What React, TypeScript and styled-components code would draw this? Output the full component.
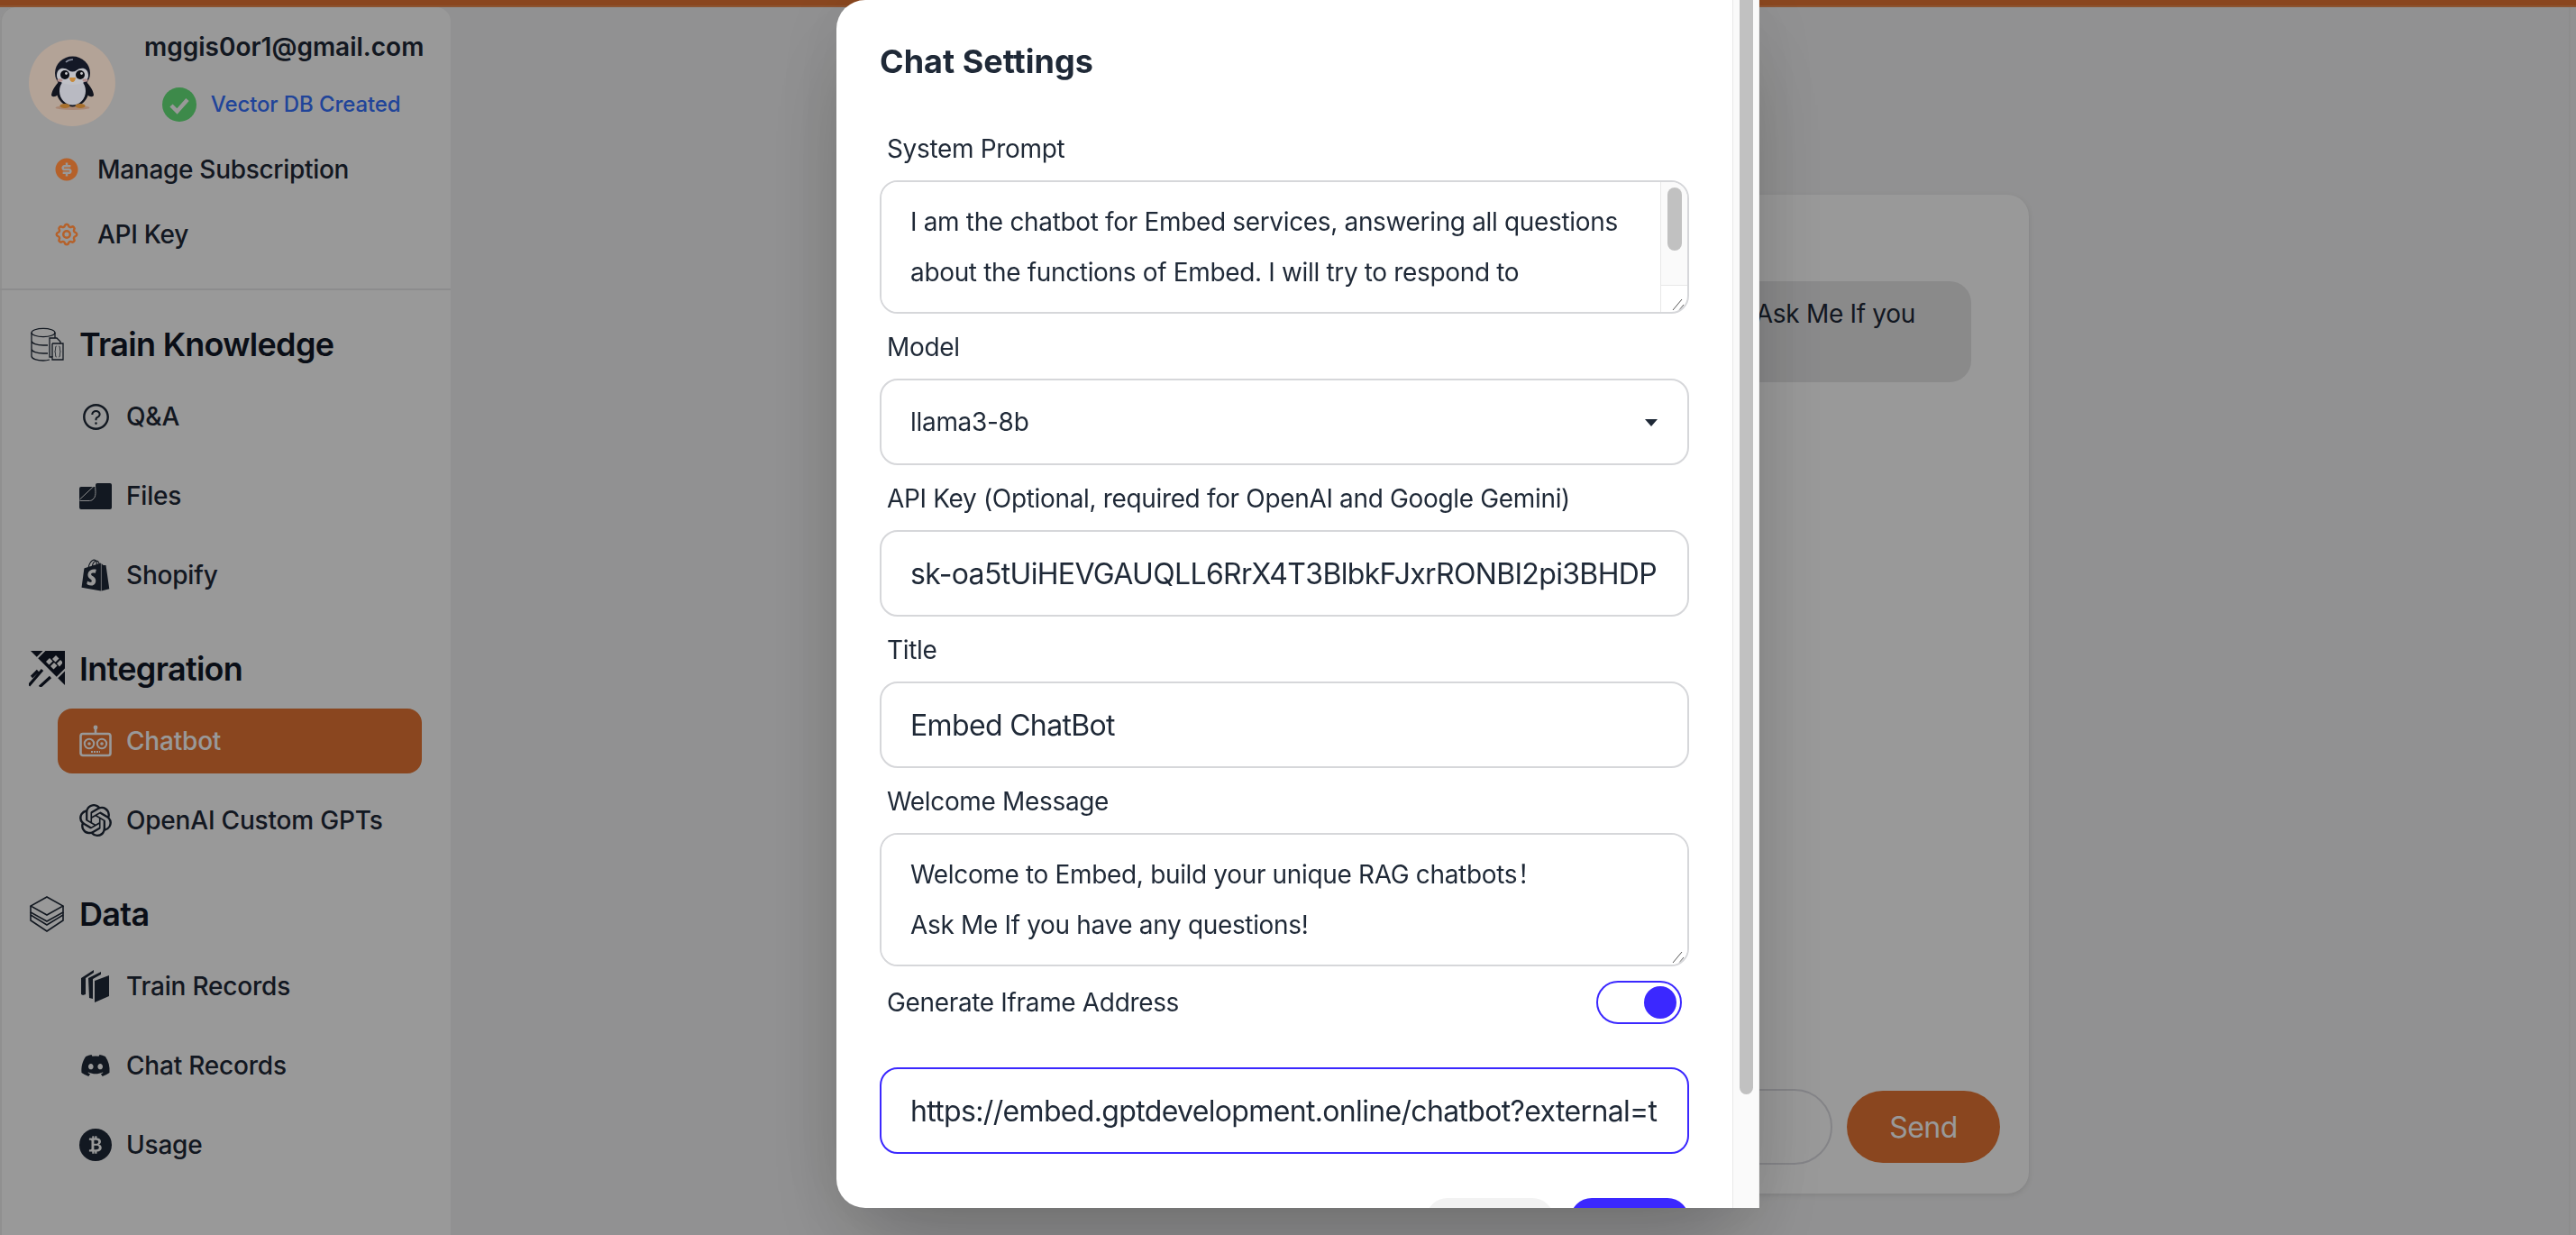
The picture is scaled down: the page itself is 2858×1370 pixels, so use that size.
import React from "react";
import styled, { createGlobalStyle } from "styled-components";
import { FaDiscord, FaShopify } from "react-icons/fa";
import { HiOutlineCog } from "react-icons/hi";
import { AiOutlineQuestionCircle } from "react-icons/ai";
import { BsCurrencyBitcoin } from "react-icons/bs";
import { RiMoneyDollarCircleFill } from "react-icons/ri";
import { SiOpenai } from "react-icons/si";

const GlobalStyle = createGlobalStyle`
  html, body {
    margin: 0;
    height: 100%;
    overflow: hidden;
    background: #f2f2f3;
    font-family: Inter, "Noto Sans CJK SC", sans-serif;
    color: #1f2937;
  }
  * {
    box-sizing: border-box;
  }
`;

const Page = styled.div`
  height: 1370px;
  display: flex;
  flex-direction: column;
`;
const TopBar = styled.div`
  height: 8px;
  flex: none;
  background: #e67634;
  border-bottom: 2px solid #ea8a50;
`;
const Body = styled.div`
  flex: 1;
  display: flex;
  min-height: 0;
  padding-right: 6px;
`;

const Sidebar = styled.aside`
  width: 500px;
  flex: none;
  background: #fff;
  border-radius: 16px 16px 0 0;
  box-shadow: inset 2px 0 0 #f0f0f0;
  display: flex;
  flex-direction: column;
`;
const Profile = styled.div`
  height: 144px;
  padding: 28px 32px 0;
  display: flex;
  gap: 32px;
`;
/* these stay bright in the screenshot, they sit above the dimming layer */
const Avatar = styled.div`
  position: relative;
  z-index: 2;
  width: 96px;
  height: 96px;
  margin-top: 8px;
  flex: none;
  border-radius: 50%;
  background: #b3a397;
  display: flex;
  align-items: center;
  justify-content: center;
`;
const ProfileText = styled.div`
  display: flex;
  flex-direction: column;
  align-items: center;
`;
const Email = styled.div`
  font-size: 28px;
  line-height: 32px;
  font-weight: 600;
  margin-bottom: 28px;
  white-space: nowrap;
`;
const VectorStatus = styled.div`
  display: flex;
  align-items: center;
  gap: 16px;
  padding-right: 6px;
  font-size: 24px;
  line-height: 40px;
  font-weight: 500;
  letter-spacing: -0.1px;
  color: #3672ff;
`;
const AccountLink = styled.div`
  height: 72px;
  padding-left: 59px;
  display: flex;
  align-items: center;
  gap: 19px;
  font-size: 28px;
  font-weight: 500;
  letter-spacing: -0.3px;
`;
const AccountIcon = styled.span`
  position: relative;
  z-index: 2;
  width: 30px;
  height: 30px;
  flex: none;
  color: #b5612a;
  display: flex;
  align-items: center;
  justify-content: center;
`;
const Divider = styled.hr`
  margin: 24px 0 36px;
  height: 2px;
  border: 0;
  flex: none;
  background: #e9e9ec;
`;
const Section = styled.section`
  margin-bottom: 44px;
  display: flex;
  flex-direction: column;
  gap: 16px;
`;
const SectionHead = styled.h2`
  margin: 0 0 4px;
  height: 48px;
  padding-left: 32px;
  display: flex;
  align-items: center;
  gap: 16px;
  font-size: 36px;
  font-weight: 600;
  letter-spacing: -0.7px;
  color: #111827;
`;
const HeadIcon = styled.span`
  width: 40px;
  height: 40px;
  flex: none;
  display: flex;
  align-items: center;
  justify-content: center;
`;
const NavItem = styled.div<{ $active?: boolean }>`
  height: 72px;
  width: 404px;
  margin-left: 64px;
  padding-left: 24px;
  border-radius: 16px;
  display: flex;
  align-items: center;
  gap: 16px;
  font-size: 28px;
  font-weight: 500;
  letter-spacing: -0.2px;
  background: ${(p) => (p.$active ? "#e67634" : "transparent")};
  color: ${(p) => (p.$active ? "#fff" : "#1f2937")};
`;
const NavIcon = styled.span`
  width: 36px;
  height: 36px;
  flex: none;
  display: flex;
  align-items: center;
  justify-content: center;
`;
const BitcoinBadge = styled(NavIcon)`
  border-radius: 50%;
  background: #1f2937;
  color: #fff;
`;

const Main = styled.main`
  flex: 1;
  min-width: 0;
  padding: 208px 0 0 600px;
  border-right: 2px solid #ebebec;
`;
const ChatCard = styled.div`
  width: 1151px;
  height: 1108px;
  background: #fff;
  border-radius: 24px;
  box-shadow: 0 2px 6px rgba(0, 0, 0, 0.1);
  padding: 96px 32px 32px;
  display: flex;
  flex-direction: column;
  justify-content: space-between;
`;
const Bubble = styled.div`
  align-self: flex-end;
  margin-right: 32px;
  padding: 16px 62px 16px 32px;
  border-radius: 24px;
  background: #e6e6e7;
  font-size: 28px;
  line-height: 40px;
  letter-spacing: -0.3px;
  white-space: nowrap;
`;
const ChatForm = styled.div`
  display: flex;
  align-items: center;
  gap: 16px;
`;
const ChatInput = styled.div`
  flex: 1;
  height: 84px;
  border: 2px solid #dcdce2;
  border-radius: 42px;
`;
const SendButton = styled.div`
  width: 170px;
  height: 80px;
  border-radius: 40px;
  background: #e67634;
  color: #fff;
  font-size: 32px;
  letter-spacing: -0.5px;
  display: flex;
  align-items: center;
  justify-content: center;
`;

const Backdrop = styled.div`
  position: fixed;
  inset: 0;
  z-index: 1;
  background: rgba(0, 0, 0, 0.4);
`;
const Modal = styled.div`
  position: fixed;
  z-index: 3;
  top: 0;
  left: 928px;
  width: 1024px;
  height: 1340px;
  background: #fff;
  border-radius: 32px 0 0 32px;
  box-shadow: 0 50px 100px -24px rgba(0, 0, 0, 0.25), 0 0 90px rgba(0, 0, 0, 0.08);
  display: flex;
  overflow: hidden;
`;
const ModalBody = styled.div`
  flex: 1;
  min-width: 0;
  padding: 40px 48px 0;
`;
const ModalRail = styled.div`
  width: 30px;
  flex: none;
  padding: 0 6px 0 7px;
  background: #fafafa;
  border-left: 1px solid #e8e8e8;
  border-right: 1px solid #efefef;
`;
const RailThumb = styled.div`
  height: 1214px;
  background: #c1c1c1;
  border-radius: 0 0 8px 8px;
`;
const ModalTitle = styled.h3`
  margin: 0 0 32px;
  font-size: 36px;
  line-height: 56px;
  font-weight: 700;
`;
const FieldLabel = styled.label`
  display: block;
  height: 72px;
  padding: 17px 8px 15px;
  font-size: 28px;
  line-height: 40px;
  letter-spacing: -0.34px;
`;
const fieldCss = `
  display: block;
  width: 100%;
  background: #fff;
  border: 2px solid #d6d7da;
  border-radius: 20px;
  padding: 0 32px;
  color: #1f2937;
  font-family: Inter, "Noto Sans CJK SC", sans-serif;
  outline: none;
`;
const TextInput = styled.input<{ $focused?: boolean }>`
  ${fieldCss}
  height: 96px;
  font-size: 32px;
  letter-spacing: -0.66px;
  border-color: ${(p) => (p.$focused ? "#3b28ff" : "#d6d7da")};
`;
const AreaBox = styled.div`
  position: relative;
  height: 148px;
  display: flex;
  overflow: hidden;
  border: 2px solid #d6d7da;
  border-radius: 20px;
`;
const TextArea = styled.textarea`
  flex: 1;
  min-width: 0;
  border: 0;
  outline: none;
  padding: 16px 32px;
  font-family: Inter, "Noto Sans CJK SC", sans-serif;
  font-size: 28px;
  line-height: 56px;
  letter-spacing: -0.34px;
  color: #1f2937;
  resize: none;
  overflow: hidden;
`;
const AreaRail = styled.div`
  width: 30px;
  flex: none;
  display: flex;
  flex-direction: column;
  border-left: 1px solid #e8e8e8;
`;
const AreaTrack = styled.div`
  flex: 1;
  padding: 6px 6px 0 7px;
  background: #fafafa;
  border-bottom: 1px solid #e8e8e8;
`;
const AreaThumb = styled.div`
  height: 70px;
  border-radius: 8px;
  background: #c1c1c1;
`;
const AreaCorner = styled.div`
  height: 29px;
  flex: none;
`;
const ResizeGrip = styled.svg`
  position: absolute;
  right: 1px;
  bottom: 1px;
  width: 17px;
  height: 14px;
`;
const SelectWrap = styled.div`
  position: relative;
  &::after {
    content: "";
    position: absolute;
    top: 45px;
    right: 35px;
    border-style: solid;
    border-width: 8px 7.5px 0;
    border-color: #1f2937 transparent transparent;
  }
`;
const Select = styled.select`
  ${fieldCss}
  height: 96px;
  font-size: 28px;
  letter-spacing: -0.3px;
  appearance: none;
`;
const ToggleRow = styled.div`
  height: 72px;
  margin: 4px 0 36px;
  padding: 0 8px;
  display: flex;
  align-items: center;
  justify-content: space-between;
  font-size: 28px;
  letter-spacing: -0.34px;
`;
const Toggle = styled.div`
  width: 95px;
  height: 48px;
  padding: 4px;
  border: 2px solid #3b28ff;
  border-radius: 24px;
  display: flex;
  justify-content: flex-end;
  &::after {
    content: "";
    width: 36px;
    height: 36px;
    border-radius: 50%;
    background: #3b28ff;
  }
`;
const ModalActions = styled.div`
  margin-top: 49px;
  display: flex;
  justify-content: flex-end;
  gap: 18px;
`;
const ActionButton = styled.button<{ $primary?: boolean }>`
  height: 96px;
  width: ${(p) => (p.$primary ? "132px" : "142px")};
  border: 0;
  border-radius: 24px;
  background: ${(p) => (p.$primary ? "#3b28ff" : "#f2f2f2")};
`;

const Grip = () => (
  <ResizeGrip viewBox="0 0 17 14" fill="none" stroke="#555" strokeWidth="1">
    <path d="M2 13 L12 1 M9 13 L14 7" />
  </ResizeGrip>
);

const PenguinIcon = () => (
  <svg width="47" height="60" viewBox="0 0 47 60">
    <ellipse cx="23.5" cy="57.5" rx="19" ry="2.4" fill="#a98875" />
    <path d="M9 28 C3 34 0 40 0 44 C3 47 8 44 11 38 Z M38 28 C44 34 47 40 47 44 C44 47 39 44 36 38 Z" fill="#12151f" />
    <ellipse cx="23.5" cy="38" rx="18" ry="18.5" fill="#12151f" />
    <ellipse cx="23.5" cy="19" rx="19.5" ry="18.5" fill="#141826" />
    <ellipse cx="23.5" cy="39" rx="14.5" ry="15.5" fill="#b9bac2" />
    <path d="M6 22 C6 13 14 12 19 16 C22 18 25 18 28 16 C33 12 41 13 41 22 C41 28 34 32 23.5 32 C13 32 6 28 6 22 Z" fill="#bfc0c6" />
    <circle cx="15" cy="21" r="5" fill="#0d0f16" />
    <circle cx="32" cy="21" r="5" fill="#0d0f16" />
    <circle cx="16.5" cy="19.5" r="1.4" fill="#c8c8cc" />
    <circle cx="33.5" cy="19.5" r="1.4" fill="#c8c8cc" />
    <path d="M20 24 H27 C27 27 25 29 23.5 29 C22 29 20 27 20 24 Z" fill="#c78a3c" />
    <ellipse cx="9.5" cy="27" rx="3" ry="1.8" fill="#b08f8e" />
    <ellipse cx="37.5" cy="27" rx="3" ry="1.8" fill="#b08f8e" />
    <path d="M16 7 C18 5 21 4 24 4" fill="none" stroke="#8b90a0" strokeWidth="1.6" />
    <ellipse cx="15" cy="55.5" rx="5.5" ry="2.6" fill="#a8702c" />
    <ellipse cx="32" cy="55.5" rx="5.5" ry="2.6" fill="#a8702c" />
  </svg>
);

const CheckBadge = () => (
  <svg width="38" height="38" viewBox="0 0 38 38">
    <circle cx="19" cy="19" r="19" fill="#66e67c" />
    <path d="M10 20 L16.5 26.5 L28 13.5" fill="none" stroke="#fff" strokeWidth="4.5" />
  </svg>
);

const DatabaseFileIcon = () => (
  <svg width="38" height="38" viewBox="0 0 38 38" fill="none" stroke="#1f2937" strokeWidth="1.3">
    <ellipse cx="15" cy="6" rx="13" ry="4.6" />
    <path d="M2 6 V32 C2 35 8 37 15 37 C18 37 20 36.6 22 36 M28 6 V12 M2 15 C2 18 8 20 15 20 H20 M2 24 C2 27 8 29 15 29 H20" />
    <path d="M22 12 H30 L34 16 V18 H37 V36 H25 V33 H22 Z" fill="#fff" />
    <path d="M25 18 H34 M25 18 V33" />
    <path d="M29.5 21 C28 21 29 26 27.8 27 C29 28 28 33 29.5 33 M32.5 21 C34 21 33 26 34.2 27 C33 28 34 33 32.5 33" strokeWidth="1" />
  </svg>
);
const FilesIcon = () => (
  <svg width="36" height="29" viewBox="0 0 36 29">
    <path d="M0 6 A2 2 0 0 1 2 4 H18 V2 A2 2 0 0 1 20 0 H34 A2 2 0 0 1 36 2 V27 A2 2 0 0 1 34 29 H2 A2 2 0 0 1 0 27 Z" fill="#1f2937" />
    <path d="M0.5 18 L17.5 2 C18 9 19 15 15 18 C13.5 19.5 12 19.5 10 19.5 H0.5" fill="none" stroke="#fff" strokeWidth="0.9" />
  </svg>
);
const RocketIcon = () => (
  <svg width="40" height="40" viewBox="0 0 40 40">
    <path d="M2 0 H40 V38 Z" fill="#111827" />
    <path d="M9 8 L18 -1 M31 30 L41 20" stroke="#fff" strokeWidth="2" />
    <path d="M19 12 L23 8 L26.5 11.5 L22.5 15.5 Z M26 9 L30 5 L33.5 8.5 L29.5 12.5 Z M24 17 L28 13 L31.5 16.5 L27.5 20.5 Z M31 14 L35 10 L37 12 L37 14 L34 17.5 Z" fill="#fff" />
    <path d="M0 38.5 L15 21 M12 40 L24 29 M3 29 L10 22" fill="none" stroke="#111827" strokeWidth="3.2" />
  </svg>
);
const BotIcon = () => (
  <svg width="36" height="36" viewBox="0 0 36 36" fill="none" stroke="currentColor" strokeWidth="2.6">
    <circle cx="18" cy="3" r="2.4" fill="currentColor" stroke="none" />
    <path d="M18 4 V11" />
    <rect x="1.5" y="10" width="33" height="24" rx="2.5" />
    <circle cx="11" cy="21" r="5.2" strokeWidth="2" />
    <circle cx="25" cy="21" r="5.2" strokeWidth="2" />
    <circle cx="11" cy="21" r="1.8" fill="currentColor" stroke="none" />
    <circle cx="25" cy="21" r="1.8" fill="currentColor" stroke="none" />
    <path d="M13 30 H23" strokeWidth="2" strokeDasharray="2 1" />
  </svg>
);
const StackIcon = () => (
  <svg width="38" height="40" viewBox="0 0 38 40" fill="none" stroke="#1f2937" strokeWidth="1.6">
    <path d="M19 1 L37 11 L19 21 L1 11 Z" />
    <path d="M1 11 V18 L19 28 L37 18 V11" />
    <path d="M1 18 V27 L19 39 L37 27 V18" />
    <path d="M1 21 L19 32 L37 21" />
  </svg>
);
const RecordsIcon = () => (
  <svg width="32" height="36" viewBox="0 0 32 36" fill="#1f2937">
    <path d="M0 9 L14 0 V3 L5 9 V27 L2 28 L0 27 Z" />
    <path d="M8 9 L22 2 V5 L13 10 V32 L9 31 Z" />
    <path d="M15 12 L31 6 V29 L15 36 Z" />
  </svg>
);

const App = () => (
  <>
    <GlobalStyle />
    <Page>
      <TopBar />
      <Body>
        <Sidebar>
          <Profile>
            <Avatar>
              <PenguinIcon />
            </Avatar>
            <ProfileText>
              <Email>mggis0or1@gmail.com</Email>
              <VectorStatus>
                <CheckBadge />
                Vector DB Created
              </VectorStatus>
            </ProfileText>
          </Profile>
          <AccountLink>
            <AccountIcon>
              <RiMoneyDollarCircleFill size={36} />
            </AccountIcon>
            Manage Subscription
          </AccountLink>
          <AccountLink>
            <AccountIcon>
              <HiOutlineCog size={38} />
            </AccountIcon>
            API Key
          </AccountLink>
          <Divider />
          <Section>
            <SectionHead>
              <HeadIcon>
                <DatabaseFileIcon />
              </HeadIcon>
              Train Knowledge
            </SectionHead>
            <NavItem>
              <NavIcon>
                <AiOutlineQuestionCircle size={33} />
              </NavIcon>
              Q&amp;A
            </NavItem>
            <NavItem>
              <NavIcon>
                <FilesIcon />
              </NavIcon>
              Files
            </NavItem>
            <NavItem>
              <NavIcon>
                <FaShopify size={36} />
              </NavIcon>
              Shopify
            </NavItem>
          </Section>
          <Section>
            <SectionHead>
              <HeadIcon>
                <RocketIcon />
              </HeadIcon>
              Integration
            </SectionHead>
            <NavItem $active>
              <NavIcon>
                <BotIcon />
              </NavIcon>
              Chatbot
            </NavItem>
            <NavItem>
              <NavIcon>
                <SiOpenai size={36} />
              </NavIcon>
              OpenAI Custom GPTs
            </NavItem>
          </Section>
          <Section>
            <SectionHead>
              <HeadIcon>
                <StackIcon />
              </HeadIcon>
              Data
            </SectionHead>
            <NavItem>
              <NavIcon>
                <RecordsIcon />
              </NavIcon>
              Train Records
            </NavItem>
            <NavItem>
              <NavIcon>
                <FaDiscord size={34} />
              </NavIcon>
              Chat Records
            </NavItem>
            <NavItem>
              <BitcoinBadge>
                <BsCurrencyBitcoin size={24} />
              </BitcoinBadge>
              Usage
            </NavItem>
          </Section>
        </Sidebar>
        <Main>
          <ChatCard>
            <Bubble>
              Welcome to Embed, build your unique RAG chatbots！ Ask Me If you
              <br />
              have any questions!
            </Bubble>
            <ChatForm>
              <ChatInput />
              <SendButton>Send</SendButton>
            </ChatForm>
          </ChatCard>
        </Main>
      </Body>
    </Page>
    <Backdrop />
    <Modal>
      <ModalBody>
        <ModalTitle>Chat Settings</ModalTitle>
        <FieldLabel>System Prompt</FieldLabel>
        <AreaBox>
          <TextArea
            readOnly
            value="I am the chatbot for Embed services, answering all questions about the functions of Embed. I will try to respond to questions from users in a friendly and accurate way."
          />
          <AreaRail>
            <AreaTrack>
              <AreaThumb />
            </AreaTrack>
            <AreaCorner />
          </AreaRail>
          <Grip />
        </AreaBox>
        <FieldLabel>Model</FieldLabel>
        <SelectWrap>
          <Select defaultValue="llama3-8b">
            <option>llama3-8b</option>
          </Select>
        </SelectWrap>
        <FieldLabel>API Key (Optional, required for OpenAI and Google Gemini)</FieldLabel>
        <TextInput readOnly value="sk-oa5tUiHEVGAUQLL6RrX4T3BlbkFJxrRONBI2pi3BHDP" />
        <FieldLabel>Title</FieldLabel>
        <TextInput readOnly value="Embed ChatBot" />
        <FieldLabel>Welcome Message</FieldLabel>
        <AreaBox>
          <TextArea
            readOnly
            value={"Welcome to Embed, build your unique RAG chatbots！\nAsk Me If you have any questions!"}
          />
          <Grip />
        </AreaBox>
        <ToggleRow>
          Generate Iframe Address
          <Toggle />
        </ToggleRow>
        <TextInput
          $focused
          readOnly
          value="https://embed.gptdevelopment.online/chatbot?external=true&id=embed"
        />
        <ModalActions>
          <ActionButton aria-label="Close" />
          <ActionButton $primary aria-label="Save" />
        </ModalActions>
      </ModalBody>
      <ModalRail>
        <RailThumb />
      </ModalRail>
    </Modal>
  </>
);

export default App;
